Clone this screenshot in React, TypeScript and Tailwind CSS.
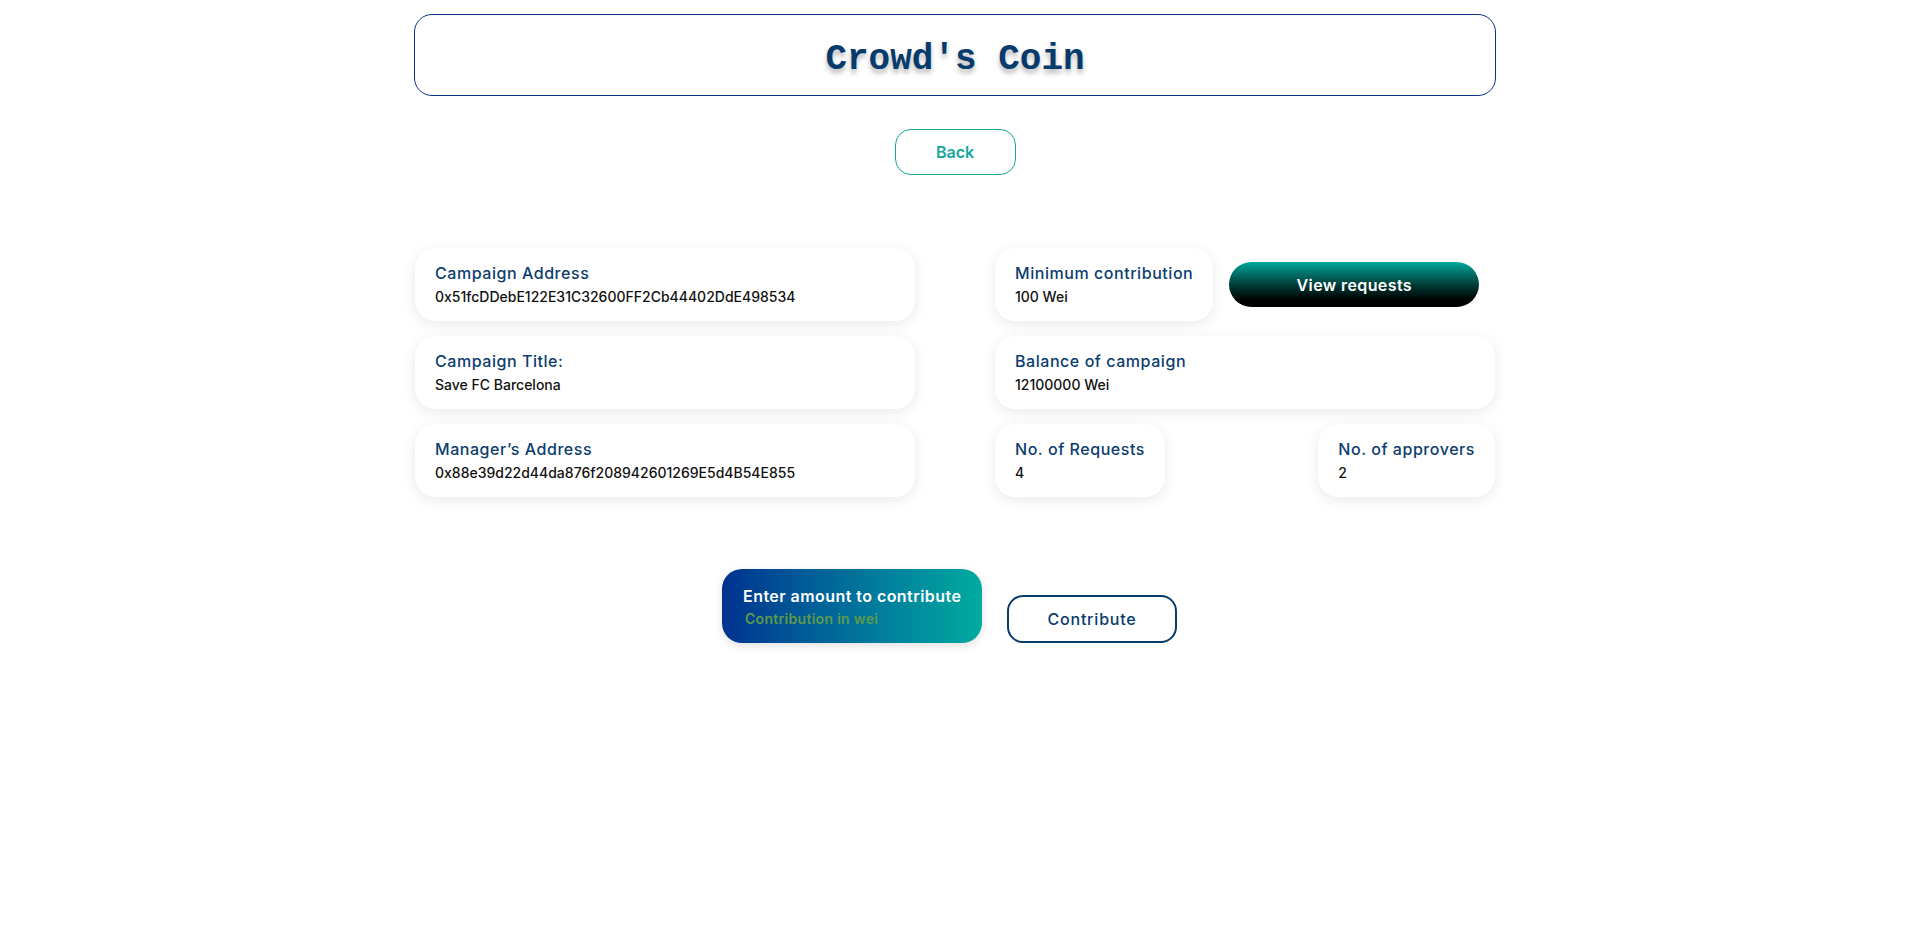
import React, { useState } from "react";

const InfoCard = ({ label, value, className = "" }: { label: string; value: string; className?: string }) => {
  return (
    <div
      className={
        "rounded-[20px] bg-white px-5 pt-[13px] pb-[14px] shadow-[0_3px_14px_rgba(0,0,0,0.09)] " + className
      }
    >
      <div className="text-[16px] leading-6 font-medium tracking-[0.55px] text-[#0b3d6e]">{label}</div>
      <div className="mt-[2px] text-[14px] leading-5 font-medium text-[#111]">{value}</div>
    </div>
  );
};

const App = () => {
  const [amount, setAmount] = useState("");

  return (
    <div className="min-h-screen bg-white pl-[4px]" style={{ fontFamily: "Inter, 'Noto Sans', sans-serif" }}>
      <div className="mx-auto w-[1082px] pt-[14px]">
        {/* header */}
        <div className="flex h-[82px] items-center justify-center rounded-[18px] border border-[#0a2f86]">
          <h1
            className="pt-[10px] text-[36px] font-bold text-[#073b6b] [text-shadow:0_4px_5px_rgba(0,0,0,0.28)]"
            style={{ fontFamily: "'Liberation Mono', 'DejaVu Sans Mono', monospace" }}
          >
            Crowd's Coin
          </h1>
        </div>

        <div className="mt-[33px] flex justify-center">
          <button className="h-[46px] w-[121px] rounded-[16px] border border-[#1aa99e] text-[16px] font-semibold text-[#14a89d]">
            Back
          </button>
        </div>

        {/* campaign details */}
        <div className="mx-auto mt-[73px] grid w-[1080px] grid-cols-2 gap-x-[80px]">
          <div className="flex flex-col gap-[15px]">
            <InfoCard label="Campaign Address" value="0x51fcDDebE122E31C32600FF2Cb44402DdE498534" />
            <InfoCard label="Campaign Title:" value="Save FC Barcelona" />
            <InfoCard label="Manager’s Address" value="0x88e39d22d44da876f208942601269E5d4B54E855" />
          </div>
          <div className="flex flex-col gap-[15px]">
            <div className="flex items-center">
              <InfoCard label="Minimum contribution" value="100 Wei" />
              <button className="ml-[16px] h-[45px] w-[250px] rounded-full bg-gradient-to-b from-[#00a99d] to-[#000000] text-[16px] font-semibold tracking-[0.4px] text-white">
                View requests
              </button>
            </div>
            <InfoCard label="Balance of campaign" value="12100000 Wei" />
            <div className="flex justify-between">
              <InfoCard label="No. of Requests" value="4" />
              <InfoCard label="No. of approvers" value="2" />
            </div>
          </div>
        </div>

        {/* contribute */}
        <div className="mt-[72px] flex items-end justify-center gap-[25px] pr-[11px]">
          <div className="flex h-[74px] w-[260px] flex-col justify-center rounded-[20px] bg-gradient-to-r from-[#04318f] to-[#00ab9f] px-[21px] shadow-[0_3px_10px_rgba(0,0,0,0.12)]">
            <label className="whitespace-nowrap text-[16px] leading-6 font-semibold tracking-[0.45px] text-white">
              Enter amount to contribute
            </label>
            <input
              value={amount}
              onChange={(e) => setAmount(e.target.value)}
              placeholder="Contribution in wei"
              className="mt-[1px] w-full bg-transparent px-[2px] text-[14px] leading-5 font-semibold tracking-[0.3px] text-white outline-none placeholder:text-[#5f9a4c]"
            />
          </div>
          <button className="h-[48px] w-[170px] rounded-[16px] border-2 border-[#073b6b] text-[16px] font-medium tracking-[0.8px] text-[#073b6b]">
            Contribute
          </button>
        </div>
      </div>
    </div>
  );
};

export default App;
